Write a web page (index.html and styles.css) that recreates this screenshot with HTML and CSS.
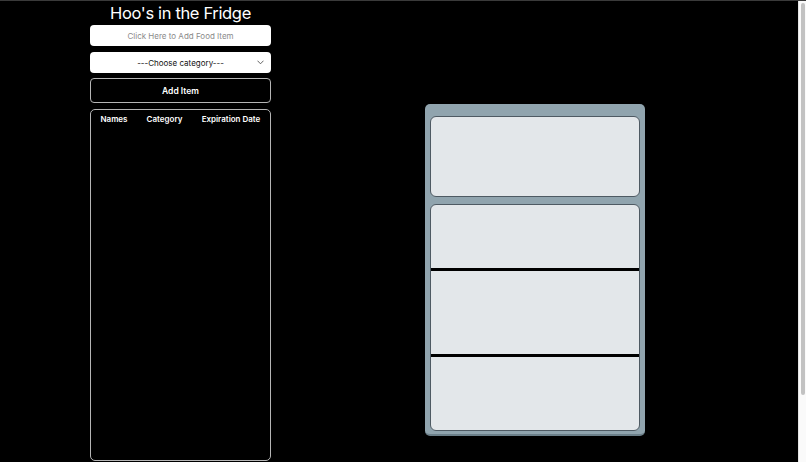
FILE: index.html
```html
<!DOCTYPE html>
<html lang="en">
<head>
<meta charset="utf-8">
<title>Hoo's in the Fridge</title>
<link rel="stylesheet" href="styles.css">
</head>
<body>
<div class="page">
  <div class="left">
    <h1 class="title">Hoo's in the Fridge</h1>
    <input class="food-input" type="text" placeholder="Click Here to Add Food Item">
    <div class="select-wrap">
      <select class="category">
        <option>---Choose category---</option>
      </select>
      <svg class="chevron" width="7" height="5" viewBox="0 0 7 5"><path d="M0.8 1 L3.5 3.8 L6.2 1" fill="none" stroke="#555" stroke-width="0.9" stroke-linecap="round" stroke-linejoin="round"/></svg>
    </div>
    <button class="add-btn">Add Item</button>
    <div class="table-box">
      <div class="table-head">
        <div class="th">Names</div>
        <div class="th">Category</div>
        <div class="th">Expiration Date</div>
      </div>
    </div>
  </div>
  <div class="fridge">
    <div class="freezer"></div>
    <div class="main-compartment">
      <div class="shelf shelf-1"></div>
      <div class="shelf shelf-2"></div>
      <div class="shelf shelf-3"></div>
    </div>
  </div>
</div>
<div class="scrollbar"><div class="scroll-thumb"></div></div>
</body>
</html>
```

FILE: styles.css
```css
html {
  background: #000;
  scrollbar-width: none;
}
html::-webkit-scrollbar {
  display: none;
}
body {
  margin: 0;
  background: #000;
  border-top: 1px solid #3a3a3a;
  font-family: Inter, "Liberation Sans", sans-serif;
  color: #fff;
}
.page {
  display: flex;
  align-items: flex-start;
  padding-left: 90px;
  padding-bottom: 83px;
}
.left {
  width: 181px;
  display: flex;
  flex-direction: column;
}
.title {
  margin: 0;
  height: 24px;
  font-size: 16.5px;
  line-height: 25px;
  letter-spacing: -0.35px;
  font-weight: 400;
  text-align: center;
  color: #fff;
}
.food-input {
  box-sizing: border-box;
  width: 100%;
  height: 21px;
  border: none;
  border-radius: 4px;
  background: #fff;
  text-align: center;
  font-family: Inter, "Liberation Sans", sans-serif;
  font-size: 8px;
  color: #222;
  padding: 0;
  outline: none;
}
.food-input::placeholder {
  color: #8a8a8a;
}
.select-wrap {
  position: relative;
  margin-top: 6px;
}
.category {
  box-sizing: border-box;
  display: block;
  width: 100%;
  height: 21px;
  border: none;
  border-radius: 4px;
  background: #fff;
  -webkit-appearance: none;
  appearance: none;
  text-align: center;
  text-align-last: center;
  font-family: Inter, "Liberation Sans", sans-serif;
  font-size: 8px;
  color: #111;
  padding: 0;
  outline: none;
}
.chevron {
  position: absolute;
  right: 7px;
  top: 8px;
}
.add-btn {
  box-sizing: border-box;
  margin-top: 5px;
  width: 100%;
  height: 25px;
  background: #000;
  border: 1px solid #b5b5b5;
  border-radius: 4px;
  color: #fff;
  font-family: Inter, "Liberation Sans", sans-serif;
  font-size: 8.5px;
  font-weight: 600;
  padding: 0;
}
.table-box {
  box-sizing: border-box;
  margin-top: 6px;
  height: 352px;
  border: 1px solid #b5b5b5;
  border-radius: 5px;
}
.table-head {
  display: grid;
  grid-template-columns: 46px 55px 1fr;
  padding-top: 4px;
}
.th {
  text-align: center;
  font-size: 8px;
  font-weight: 600;
  line-height: 11px;
  white-space: nowrap;
}
.fridge {
  box-sizing: border-box;
  margin-left: 154px;
  margin-top: 103px;
  width: 220px;
  height: 332px;
  padding: 12px 5px 3px 5px;
  background: #90a4ae;
  border-radius: 5px;
  border-bottom: 2px solid #6c808a;
  display: flex;
  flex-direction: column;
  gap: 7px;
}
.freezer {
  box-sizing: border-box;
  height: 81px;
  background: #e3e7ea;
  border: 1px solid #4e5a63;
  border-radius: 6px;
}
.main-compartment {
  box-sizing: border-box;
  flex: 1;
  background: #e3e7ea;
  border: 1px solid #4e5a63;
  border-radius: 6px;
  display: flex;
  flex-direction: column;
  overflow: hidden;
}
.shelf-1 {
  height: 63px;
  border-bottom: 3px solid #000;
}
.shelf-2 {
  height: 83px;
  border-bottom: 3px solid #000;
}
.shelf-3 {
  flex: 1;
}
.scrollbar {
  position: fixed;
  top: 1px;
  right: 0;
  bottom: 0;
  width: 8px;
  background: #fafafa;
  border-left: 1px solid #e4e4e4;
  box-sizing: border-box;
}
.scroll-thumb {
  margin: 2px 1px 0 2px;
  height: 392px;
  background: #c2c2c2;
  border-radius: 3px;
}
```
